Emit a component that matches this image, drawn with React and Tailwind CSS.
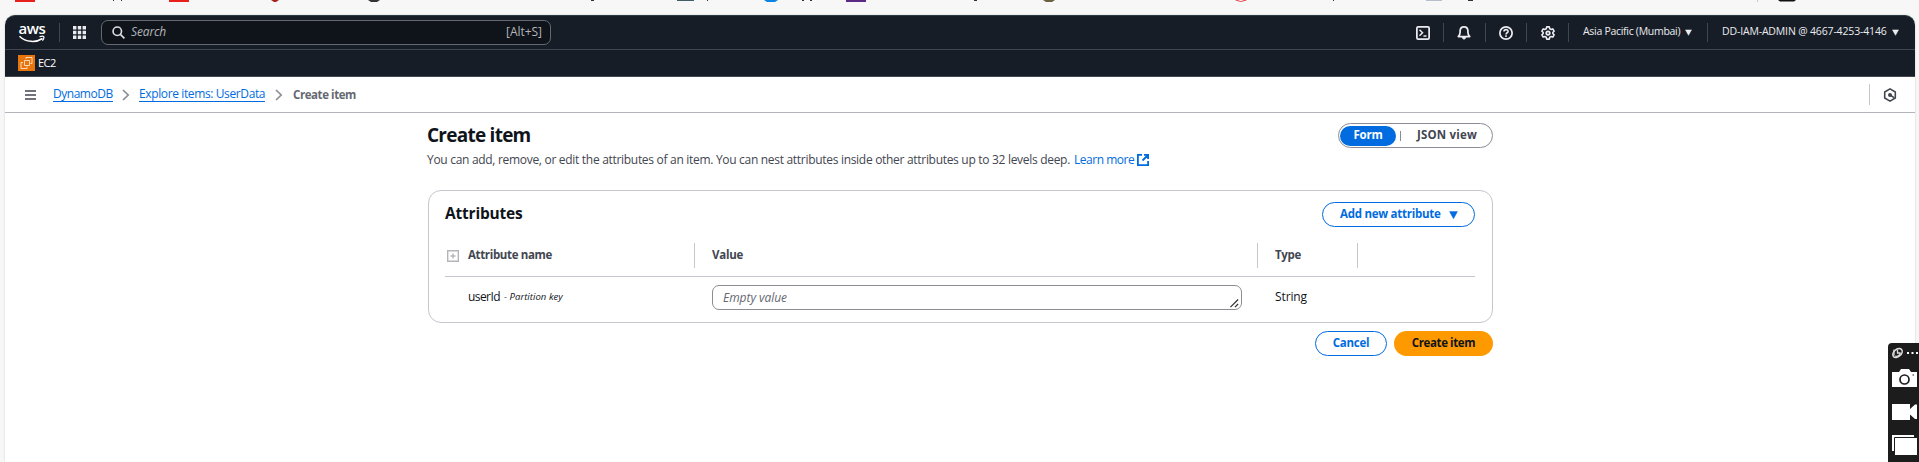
import React from "react";

const Sep = ({ className = "" }) => <div className={`h-[19px] w-px bg-[#424650] ${className}`} />;

const Caret = ({ className = "h-[7px] w-2" }) => (
  <svg viewBox="0 0 8 7" className={`fill-current ${className}`}>
    <path d="M.6.5h6.8L4 6.7z" stroke="currentColor" strokeWidth=".6" strokeLinejoin="round" />
  </svg>
);

const Icon = ({ children, className = "" }) => (
  <svg viewBox="0 0 16 16" fill="none" stroke="currentColor" strokeWidth="2" className={`h-[14px] w-[14px] ${className}`}>
    {children}
  </svg>
);

function BookmarkStrip() {
  return (
    <svg viewBox="0 0 1919 15" className="block h-[15px] w-[1919px] shrink-0">
      <path fill="#e8201c" d="M15 0h20v2H15zM169 0h20v2h-20z" />
      <path fill="#a8201c" d="M271 0h8l-3 2h-2z" />
      <path fill="#333" d="M113 0h1v1h-1zM121 0h1v1h-1zM368 0h12l-3 2h-6zM591 0h3v1h-3zM707 0h1v1h-1zM802 0h2v1h-2zM810 0h2v1h-2zM974 0h3v1h-3zM1333 0h1v1h-1zM1468 0h5v1h-5z" />
      <path fill="#3e5f63" d="M677 0h17v1h-17z" />
      <path fill="#0a84e8" d="M764 0h14l-3 2h-8z" />
      <path fill="#5b2a86" d="M846 0h20v2h-20z" />
      <path fill="#6b6040" d="M1043 0h12l-3 2h-6z" />
      <path fill="none" stroke="#e8414d" d="M1235.500 0q5 3 11 0" />
      <path fill="#b4bfca" d="M1426 0h16v1h-16z" />
      <path fill="#c8c8c8" d="M1757 0h1v2h-1z" />
      <path fill="#111" d="M1778 0h18l-2 1.500h-14z" />
    </svg>
  );
}

function TopBar() {
  return (
    <header className="rounded-t-[10px] border-t border-[#2b3a42] bg-[#161d26] text-[#ebebf0]">
      <div className="flex h-[34px] items-center border-b border-[#424650]">
        <div className="ml-[13px] flex w-[28px] flex-col items-center">
          <span className="h-[12px] text-[15px] leading-[10px] font-semibold tracking-[-0.4px] text-white">aws</span>
          <svg viewBox="0 0 28 8" className="h-2 w-7" fill="none" stroke="#fff" strokeWidth="1.500">
            <path d="M1.500 1.200C8 7.600 18 7.800 24.500 3.500" />
            <path d="M21.500 1.800c2-.8 3.600-.8 4.200-.4.400.8-.1 2.800-1.300 4.200" strokeWidth="1.200" />
          </svg>
        </div>
        <Sep className="ml-[13px]" />
        <svg viewBox="0 0 13 13" className="ml-[13px] h-[13px] w-[13px] fill-[#ebebf0]">
          <path d="M0 0h3.400v3.400H0zM4.800 0h3.400v3.400H4.800zM9.600 0H13v3.400H9.600zM0 4.800h3.400v3.400H0zM4.800 4.800h3.400v3.400H4.800zM9.600 4.800H13v3.400H9.600zM0 9.600h3.400V13H0zM4.800 9.600h3.400V13H4.800zM9.600 9.600H13V13H9.600z" />
        </svg>
        <div className="ml-[15px] flex h-[25px] w-[450px] items-center rounded-[7px] border border-[#656871] bg-[#0f141a] pr-[8px] pb-px pl-[10px]">
          <Icon className="!h-[13px] !w-[13px] text-[#dedee3]">
            <circle cx="6.500" cy="6.500" r="5.200" />
            <path d="m10.300 10.300 5 5" />
          </Icon>
          <span className="ml-[6px] grow text-[12px] tracking-[-0.13px] text-[#b4b4bb] italic">Search</span>
          <span className="text-[12px] tracking-[-0.03px] text-[#b4b4bb]">[Alt+S]</span>
        </div>
        <div className="ml-auto flex items-center">
          <Icon>
            <rect x="1" y="1" width="14" height="14" rx="1.500" />
            <path d="m4 4.300 3.500 3.400L4 11.200M8.500 11.500H12" strokeWidth="1.700" />
          </Icon>
          <Sep className="ml-[13px]" />
          <Icon className="ml-[13px]">
            <path d="M1.500 12h13c-1.500-1.300-2-2.500-2-4.500V6c0-3-1.800-5-4.500-5S3.500 3 3.500 6v1.500c0 2-.5 3.200-2 4.500z" strokeLinejoin="round" />
            <path d="M6 12.500c0 3.300 4 3.300 4 0z" fill="currentColor" strokeWidth="1" />
          </Icon>
          <Sep className="ml-[14px]" />
          <Icon className="ml-[13px]">
            <circle cx="8" cy="8" r="7" />
            <path d="M5.700 6.400c0-3 4.700-2.900 4.700-.2 0 1.500-2.400 1.600-2.400 3.500M8 10.700v1.800" strokeWidth="1.800" />
          </Icon>
          <Sep className="ml-[13px]" />
          <Icon className="ml-[14px]">
            <path strokeLinejoin="round" d="M6.500 1h3l.5 2.100 1.400.8 2.100-.6 1.500 2.600L13.500 7.400v1.200l1.500 1.500-1.500 2.600-2.100-.6-1.400.8-.5 2.100h-3L6 12.900l-1.400-.8-2.100.6L1 10.100l1.500-1.500V7.400L1 5.900l1.500-2.600 2.100.6L6 3.100z" strokeWidth="1.800" />
            <circle cx="8" cy="8" r="2" />
          </Icon>
          <Sep className="ml-[13px]" />
          <span className="ml-[14px] w-[98px] pb-px text-[10.500px] font-medium tracking-[-0.29px] whitespace-nowrap">Asia Pacific (Mumbai)</span>
          <Caret className="ml-[4px] h-[7px] w-[7px]" />
          <Sep className="ml-[15px]" />
          <span className="ml-[14px] w-[165px] pb-px text-[10.500px] font-medium tracking-[-0.16px] whitespace-nowrap">DD-IAM-ADMIN @ 4667-4253-4146</span>
          <Caret className="mr-[16px] ml-[5px] h-[7px] w-[7px]" />
        </div>
      </div>
      <div className="flex h-[27px] items-center border-b border-[#424650] pl-[13px]">
        <svg viewBox="0 0 17 16" className="h-4 w-[17px]" fill="none" stroke="#fff" strokeWidth=".9">
          <rect width="17" height="16" fill="#e8750c" stroke="none" />
          <path d="M6.500 5.500h5v5h-5zM5 7.500H3v6h6v-2M8 4V2.500h6v6h-1.500" strokeWidth=".8" strokeOpacity=".9" />
        </svg>
        <span className="ml-[3px] text-[11px] tracking-[-0.5px] text-white">EC2</span>
      </div>
    </header>
  );
}

const Chevron = ({ className = "" }) => (
  <svg viewBox="0 0 8 12" className={`h-3 w-2 ${className}`} fill="none" stroke="#8c8c94" strokeWidth="1.700">
    <path d="m1 1 5.200 5L1 11" />
  </svg>
);

function Breadcrumbs() {
  return (
    <nav className="flex h-[36px] items-center border-b border-[#b4b4bb] text-[12px]">
      <svg viewBox="0 0 11 12" className="ml-[20px] h-3 w-[11px]" stroke="#424650" strokeWidth="1.600">
        <path d="M0 2h11M0 6h11M0 10h11" />
      </svg>
      <a className="ml-[17px] w-[60px] border-b border-[#006ce0] leading-[14px] tracking-[-0.48px] text-[#006ce0]">DynamoDB</a>
      <Chevron className="ml-[9px]" />
      <a className="ml-[9px] w-[126px] border-b border-[#006ce0] leading-[14px] tracking-[-0.38px] whitespace-nowrap text-[#006ce0]">Explore items: UserData</a>
      <Chevron className="ml-[10px]" />
      <span className="ml-[10px] text-[11.500px] font-bold tracking-[-0.43px] text-[#656871]">Create item</span>
      <div className="ml-auto h-[21px] w-px bg-[#c6c6cd]" />
      <svg viewBox="0 0 14 14" className="mr-[18px] ml-[13px] h-[14px] w-[14px]" fill="none" stroke="#424650" strokeWidth="1.600">
        <path d="M7 .9 12.300 4v6L7 13.100 1.700 10V4z" strokeLinejoin="round" />
        <circle cx="7" cy="7" r="2" fill="#424650" stroke="none" />
        <path d="m7 7 4 2.700" />
      </svg>
    </nav>
  );
}

function CreateItem() {
  return (
    <main className="ml-[422px] w-[1066px] text-[12px] text-[#0f141a]">
      <div className="flex h-[77px] justify-between pt-[10px]">
        <div>
          <h1 className="text-[19px] leading-[24px] font-bold tracking-[-0.75px]">Create item</h1>
          <p className="mt-[4px] flex items-center leading-[18px] whitespace-nowrap text-[#424650]">
            <span className="w-[647px] tracking-[-0.3px]">
              You can add, remove, or edit the attributes of an item. You can nest attributes inside other attributes up to 32 levels deep.
            </span>
            <a className="w-[63px] tracking-[-0.47px] text-[#006ce0]">Learn more</a>
            <svg viewBox="0 0 12 12" className="h-3 w-3" fill="none" stroke="#006ce0" strokeWidth="1.800">
              <path d="M5 .9H.9v10.200h10.200V7M7 .9h4.100V5M11 1 5.500 6.500" />
            </svg>
          </p>
        </div>
        <div className="flex h-[25px] items-center rounded-full border border-[#8c8c94] px-px text-[11.500px] font-bold">
          <span className="flex h-[20px] w-[56px] items-center justify-center rounded-full bg-[#006ce0] pb-px tracking-[-0.22px] text-white">Form</span>
          <span className="ml-[4px] h-[10px] w-px bg-[#8c8c94]" />
          <span className="w-[90px] pb-px pl-[16px] tracking-[0.18px] text-[#424650]">JSON view</span>
        </div>
      </div>
      <section className="ml-px h-[133px] rounded-[13px] border border-[#c6c6cd] pr-[17px] pl-[16px]">
        <div className="flex h-[52px] items-start justify-between pt-[11px]">
          <h2 className="text-[15.500px] leading-[22px] font-bold tracking-[-0.2px]">Attributes</h2>
          <button className="flex h-[25px] w-[153px] items-center rounded-full border border-[#006ce0] pl-[17px] text-left text-[11.500px] font-bold tracking-[-0.26px] whitespace-nowrap text-[#006ce0]">
            <span className="w-[109px] pb-px">Add new attribute</span>
            <Caret className="h-2 w-[9px]" />
          </button>
        </div>
        <div className="flex h-[34px] items-start border-b border-[#c6c6cd] text-[11.500px] font-bold text-[#424650]">
          <div className="flex h-[25px] w-[250px] items-center border-r border-[#c6c6cd] pl-[2px]">
            <svg viewBox="0 0 12 12" className="h-3 w-3" fill="none" stroke="#b4b4bb" strokeWidth="1.400">
              <path d="M.7.7h10.600v10.600H.7zM3.500 6h5M6 3.500v5" />
            </svg>
            <span className="ml-[9px] pb-[2px] tracking-[-0.35px]">Attribute name</span>
          </div>
          <div className="flex h-[25px] w-[563px] items-center border-r border-[#c6c6cd] pb-[2px] pl-[17px] tracking-[-0.26px]">Value</div>
          <div className="flex h-[25px] w-[100px] items-center border-r border-[#c6c6cd] pb-[2px] pl-[17px] tracking-[-0.3px]">Type</div>
        </div>
        <div className="flex pt-[8px]">
          <div className="flex h-[24px] w-[267px] items-center pl-[23px]">
            <span className="w-[36px] pb-px tracking-[-0.57px]">userId</span>
            <span className="text-[9.500px] tracking-[0.05px] whitespace-nowrap italic">- Partition key</span>
          </div>
          <div className="flex h-[25px] w-[530px] items-center justify-between rounded-[7px] border border-[#8c8c94] pr-[2px] pl-[10px]">
            <span className="tracking-[-0.04px] text-[#656871] italic">Empty value</span>
            <svg viewBox="0 0 10 10" className="mb-px h-[9px] w-[9px] self-end" stroke="#333" strokeWidth="1.400">
              <path d="M.5 9 9 .5M5.500 9 9 5.500" />
            </svg>
          </div>
          <span className="ml-[33px] leading-[24px] tracking-[-0.11px]">String</span>
        </div>
      </section>
      <div className="flex justify-end gap-[7px] pt-[8px] text-[11.500px] font-bold">
        <button className="h-[25px] w-[72px] rounded-full border border-[#006ce0] pb-px tracking-[-0.26px] text-[#006ce0]">Cancel</button>
        <button className="h-[25px] w-[99px] rounded-full bg-[#ff9900] pb-px tracking-[-0.4px]">Create item</button>
      </div>
    </main>
  );
}

function CaptureToolbar() {
  return (
    <aside className="absolute right-0 bottom-0 h-[119px] w-[31px] rounded-tl-[4px] bg-[#1c1c1c]">
      <svg viewBox="0 0 31 119" className="h-[119px] w-[31px]" fill="none" stroke="#fff">
        <ellipse cx="9.500" cy="10" rx="5.300" ry="3.600" transform="rotate(-40 9.500 10)" strokeWidth="1.600" stroke="#ddd" />
        <path d="M6 6.500v6M7 13c3 1 5-.8 5.500-3.500M9.500 7v3H12" strokeWidth="1.300" stroke="#ddd" />
        <path d="M19 9h2v2h-2zM23.500 9h2v2h-2zM28 9h2v2h-2z" fill="#fff" stroke="none" />
        <path d="M4 29h7l2-3h8l2 3h6v15H4z" fill="#fff" stroke="none" />
        <circle cx="16.500" cy="36.500" r="4.500" stroke="#1c1c1c" strokeWidth="1.700" />
        <path d="M24.500 32h1.500" stroke="#1c1c1c" strokeWidth="1.200" />
        <path d="M4 61h18v5l5-4.500h2V76h-2l-5-4.500V77H4z" fill="#fff" stroke="none" />
        <path d="M4 92h22v16H4z" fill="#fff" stroke="none" />
        <path d="M6.500 94.500h23v18h-23z" fill="#fff" stroke="#1c1c1c" />
      </svg>
    </aside>
  );
}

export default function App() {
  return (
    <div className="relative flex h-[462px] w-[1919px] flex-col overflow-hidden bg-[#f7f7f7] font-['Open_Sans','Noto_Sans',sans-serif]">
      <BookmarkStrip />
      <div className="mr-[4px] ml-[5px] grow rounded-t-[10px] bg-white shadow-[0_0_2px_rgba(0,0,0,0.2)]">
        <TopBar />
        <Breadcrumbs />
        <CreateItem />
      </div>
      <CaptureToolbar />
    </div>
  );
}
